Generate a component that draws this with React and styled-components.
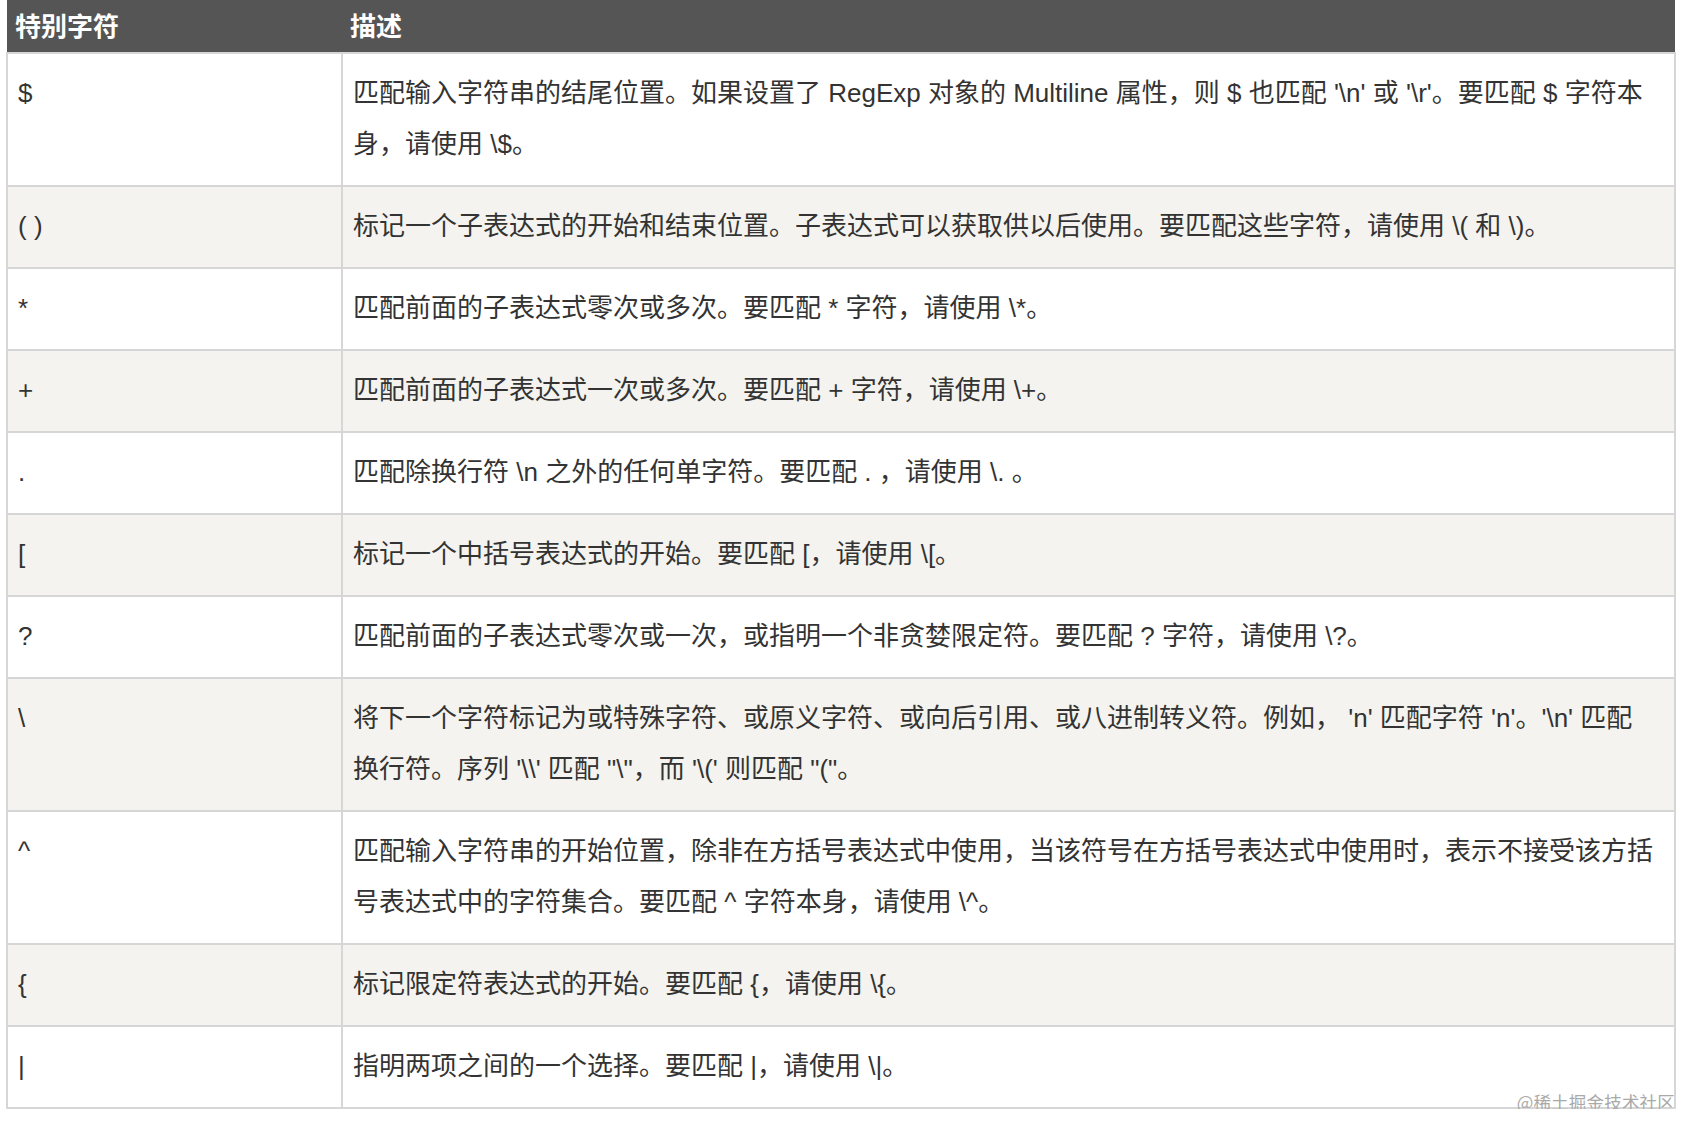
import React from 'react';
import styled, { createGlobalStyle } from 'styled-components';

const GlobalStyle = createGlobalStyle`
  body {
    margin: 0;
    background: #fff;
    font-family: "Liberation Sans", "Noto Sans CJK SC", sans-serif;
  }
`;

const Page = styled.div`
  padding: 0 6px;
`;

const Wrap = styled.div`
  position: relative;
`;

const Table = styled.table`
  width: 100%;
  border-collapse: collapse;
  table-layout: fixed;
  font-size: 26px;
  color: #333;
`;

const HeadCell = styled.th`
  background: #555;
  color: #fff;
  font-weight: bold;
  text-align: left;
  height: 48px;
  padding: 0 8px 4px;
  width: ${({ w }) => w || 'auto'};
`;

const Row = styled.tr`
  background: ${({ alt }) => (alt ? '#f4f3ef' : '#fff')};
`;

const Cell = styled.td`
  border: 2px solid #d6d6d6;
  padding: 14px 10px 15px;
  line-height: 51px;
  vertical-align: top;
  white-space: nowrap;
`;

const Line = styled.span`
  display: block;
`;

const Watermark = styled.div`
  position: absolute;
  right: 1px;
  bottom: -4px;
  font-family: "Noto Sans CJK SC", sans-serif;
  font-size: 17.5px;
  line-height: 22px;
  color: #a9a9a9;
  letter-spacing: 0.2px;
`;

const rows = [
  ['$', [String.raw`匹配输入字符串的结尾位置。如果设置了 RegExp 对象的 Multiline 属性，则 $ 也匹配 '\n' 或 '\r'。要匹配 $ 字符本`, String.raw`身，请使用 \$。`]],
  ['( )', [String.raw`标记一个子表达式的开始和结束位置。子表达式可以获取供以后使用。要匹配这些字符，请使用 \( 和 \)。`]],
  ['*', [String.raw`匹配前面的子表达式零次或多次。要匹配 * 字符，请使用 \*。`]],
  ['+', [String.raw`匹配前面的子表达式一次或多次。要匹配 + 字符，请使用 \+。`]],
  ['.', [String.raw`匹配除换行符 \n 之外的任何单字符。要匹配 . ，请使用 \. 。`]],
  ['[', [String.raw`标记一个中括号表达式的开始。要匹配 [，请使用 \[。`]],
  ['?', [String.raw`匹配前面的子表达式零次或一次，或指明一个非贪婪限定符。要匹配 ? 字符，请使用 \?。`]],
  ['\\', [String.raw`将下一个字符标记为或特殊字符、或原义字符、或向后引用、或八进制转义符。例如， 'n' 匹配字符 'n'。'\n' 匹配`, String.raw`换行符。序列 '\\' 匹配 "\"，而 '\(' 则匹配 "("。`]],
  ['^', [String.raw`匹配输入字符串的开始位置，除非在方括号表达式中使用，当该符号在方括号表达式中使用时，表示不接受该方括`, String.raw`号表达式中的字符集合。要匹配 ^ 字符本身，请使用 \^。`]],
  ['{', [String.raw`标记限定符表达式的开始。要匹配 {，请使用 \{。`]],
  ['|', [String.raw`指明两项之间的一个选择。要匹配 |，请使用 \|。`]],
];

export default function App() {
  return (
    <Page>
      <GlobalStyle />
      <Wrap>
        <Table>
          <thead>
            <tr>
              <HeadCell w="319px">特别字符</HeadCell>
              <HeadCell>描述</HeadCell>
            </tr>
          </thead>
          <tbody>
            {rows.map(([ch, lines], i) => (
              <Row key={i} alt={i % 2 === 1}>
                <Cell>{ch}</Cell>
                <Cell>
                  {lines.map((l, j) => <Line key={j}>{l}</Line>)}
                </Cell>
              </Row>
            ))}
          </tbody>
        </Table>
        <Watermark>@稀土掘金技术社区</Watermark>
      </Wrap>
    </Page>
  );
}
